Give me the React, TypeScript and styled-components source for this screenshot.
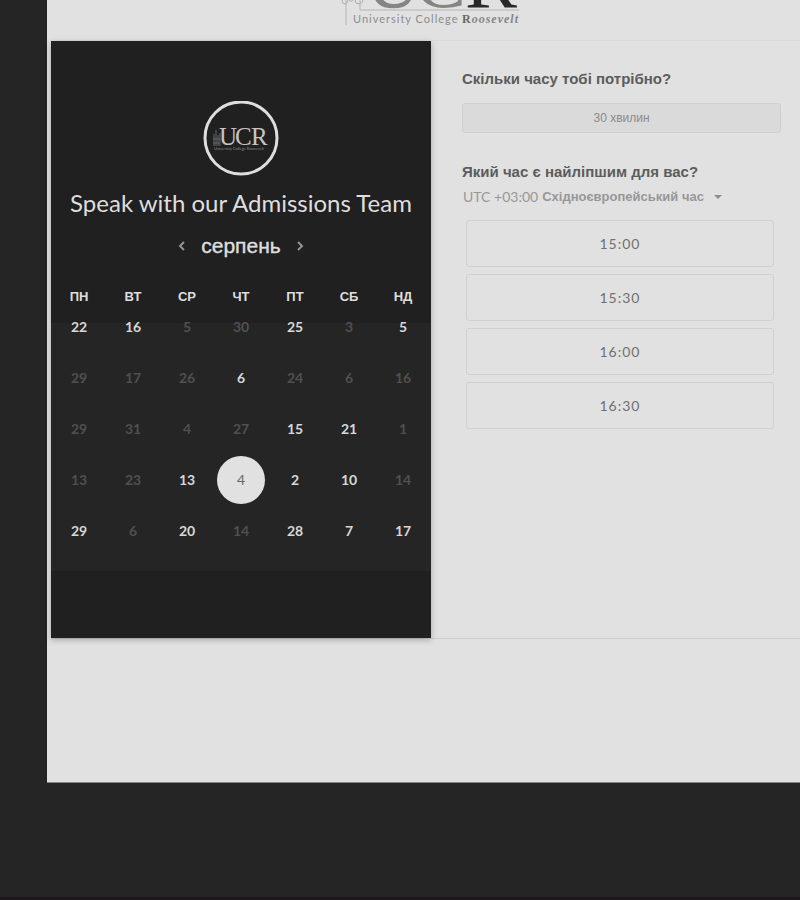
import React, { useState } from "react";
import styled, { createGlobalStyle } from "styled-components";

const GlobalStyle = createGlobalStyle`
  * { box-sizing: border-box; }
  body { margin: 0; background: #252525; font-family: "Liberation Sans", Arial, sans-serif; }
  button, select { font: inherit; color: inherit; }
`;

const Page = styled.div`
  min-height: 100vh;
  padding: 0 0 112px 47px;
  background: #252525;
  border-bottom: 3px solid #1c171a;
`;

const Sheet = styled.main`
  background: #e1e1e1;
  padding: 0 0 143px 4px;
  border-bottom: 1px solid #868786;
`;

const Header = styled.header`
  height: 40px;
  display: flex;
  justify-content: center;
  overflow: hidden;
  margin-right: -14px;
`;

const Booking = styled.section`
  display: flex;
  border-top: 1px solid #dadada;
  border-bottom: 1px solid #cecece;
`;

const DatePanel = styled.div`
  flex: 0 0 380px;
  display: flex;
  flex-direction: column;
  align-items: center;
  padding: 60px 0 67px;
  background: #202020;
  color: #dedede;
  box-shadow: 0 2px 6px rgba(0, 0, 0, 0.25);
`;

const Title = styled.h1`
  margin: 12px 0 0;
  font: 400 24px/28px Lato, sans-serif;
  white-space: nowrap;
`;

const MonthNav = styled.div`
  display: flex;
  align-items: center;
  gap: 11px;
  margin-top: 15px;
`;

const Month = styled.h2`
  margin: 0;
  font-size: 21px;
  font-weight: 400;
  line-height: 28px;
  -webkit-text-stroke: 0.4px currentColor;
`;

const Arrow = styled.button`
  display: grid;
  place-items: center;
  width: 16px;
  height: 24px;
  padding: 0;
  border: 0;
  background: none;
  color: #929292;
`;

const Calendar = styled.table`
  width: 100%;
  margin-top: 33px;
  padding: 0 1px 15px;
  border-spacing: 0;
  table-layout: fixed;
  background: linear-gradient(transparent 30px, #252525 30px) no-repeat;
`;

const Weekday = styled.th`
  padding: 0;
  font-size: 13px;
  line-height: 8px;
`;

const DayCell = styled.td`
  height: 51px;
  padding: 0;
  text-align: center;
`;

const Day = styled.button<{ $selected: boolean }>`
  display: block;
  width: 48px;
  height: 48px;
  margin: 0 auto;
  padding: 0;
  border: 0;
  border-radius: 50%;
  background: ${(p) => (p.$selected ? "#e1e1e1" : "none")};
  color: ${(p) => (p.$selected ? "#686868" : "#d8d8d8")};
  font: ${(p) => (p.$selected ? 400 : 700)} 14px/20px Lato, sans-serif;
  &:disabled { color: #505050; }
`;

const TimePanel = styled.div`
  flex: 1;
  min-width: 0;
  padding: 28px 19px 28px 31px;
`;

const Question = styled.h3`
  margin: 0;
  color: #5c5c5c;
  font-size: 15px;
  line-height: 20px;
`;

const Duration = styled.button`
  display: block;
  width: 100%;
  height: 30px;
  margin: 14px 0 29px;
  padding: 0;
  border: 1px solid #d0d0d0;
  border-radius: 3px;
  background: #dadada;
  color: #8a8a8a;
  font-size: 12px;
`;

const ZoneLabel = styled.label`
  display: flex;
  align-items: center;
  width: max-content;
  margin: 5px 0 13px;
  padding-left: 1px;
  color: #979797;
  font-size: 13px;
  line-height: 20px;
`;

const ZoneOffset = styled.span`
  margin-right: 4px;
  font: 400 14px/20px Lato, sans-serif;
`;

const ZoneSelect = styled.select`
  appearance: none;
  padding: 0;
  border: 0;
  background: none;
  font-weight: 700;
  line-height: 20px;
`;

const Caret = styled.span`
  margin-left: 10px;
  border: 4px solid transparent;
  border-top-color: #8c8c8c;
  border-bottom: 0;
`;

const Slots = styled.div`
  display: grid;
  gap: 7px;
  padding: 0 7px 0 4px;
`;

const Slot = styled.button`
  height: 47px;
  padding: 0;
  border: 1px solid #d0d0d0;
  border-radius: 3px;
  background: none;
  color: #707070;
  font: 400 14px/20px Lato, sans-serif;
  letter-spacing: 1px;
`;

const weekdays = ["ПН", "ВТ", "СР", "ЧТ", "ПТ", "СБ", "НД"];

type DayEntry = [number, boolean];
const weeks: DayEntry[][] = [
  [[22, true], [16, true], [5, false], [30, false], [25, true], [3, false], [5, true]],
  [[29, false], [17, false], [26, false], [6, true], [24, false], [6, false], [16, false]],
  [[29, false], [31, false], [4, false], [27, false], [15, true], [21, true], [1, false]],
  [[13, false], [23, false], [13, true], [4, true], [2, true], [10, true], [14, false]],
  [[29, true], [6, false], [20, true], [14, false], [28, true], [7, true], [17, true]],
];
const times = ["15:00", "15:30", "16:00", "16:30"];

function Wordmark() {
  return (
    <svg width="184" height="30" viewBox="0 0 184 30" role="img" aria-label="University College Roosevelt">
      <text y="7" fill="#858585" fontFamily="Liberation Serif, serif" fontSize="78">
        <tspan x="24">U</tspan><tspan x="73">C</tspan><tspan x="124" fill="#282828">R</tspan>
      </text>
      <path d="M5 0v25M19 0v10h159" fill="none" stroke="#b5b5b5" />
      <path d="M1 0q0 4 3 4q3-1 3-4M8 0q2 3 4 0M14 0q0 4 4 4q4-1 4-4" fill="none" stroke="#adadad" />
      <text x="12" y="23" fill="#8c8c8c" fontFamily="Lato, sans-serif" fontSize="11" letterSpacing="1">University College</text>
      <text x="121" y="23" fill="#666" fontFamily="Liberation Serif, serif" fontSize="12" fontWeight="700" letterSpacing="1">
        R<tspan fontStyle="italic" fill="#858585">oosevelt</tspan>
      </text>
    </svg>
  );
}

function Emblem() {
  return (
    <svg width="76" height="76" viewBox="0 0 76 76" role="img" aria-label="UCR">
      <circle cx="38" cy="37" r="36" fill="#202020" stroke="#dedede" strokeWidth="3" />
      <text y="44" fill="#c4c4c4" fontFamily="Liberation Serif, serif" fontSize="25">
        <tspan x="16">U</tspan><tspan x="32">C</tspan><tspan x="48">R</tspan>
      </text>
      <path d="M11 45V33M13 45V29M15 45V34M17 45V32M10 38h7M10 42h7" fill="none" stroke="#666" />
      <text x="11" y="49" fill="#888" fontFamily="Lato, sans-serif" fontSize="4">University College Roosevelt</text>
    </svg>
  );
}

function Chevron({ d }: { d: string }) {
  return (
    <svg width="8" height="11" viewBox="0 0 8 11" fill="none" stroke="currentColor" strokeWidth="2" aria-hidden="true">
      <path d={d} />
    </svg>
  );
}

export default function App() {
  const [selected, setSelected] = useState("3-3");
  return (
    <>
      <GlobalStyle />
      <Page>
        <Sheet>
          <Header><Wordmark /></Header>
          <Booking>
            <DatePanel>
              <Emblem />
              <Title>Speak with our Admissions Team</Title>
              <MonthNav>
                <Arrow aria-label="Попередній місяць"><Chevron d="M6 1L2 5l4 4" /></Arrow>
                <Month>серпень</Month>
                <Arrow aria-label="Наступний місяць"><Chevron d="M2 1l4 4-4 4" /></Arrow>
              </MonthNav>
              <Calendar>
                <thead>
                  <tr>{weekdays.map((d) => <Weekday key={d} scope="col">{d}</Weekday>)}</tr>
                </thead>
                <tbody>
                  {weeks.map((week, w) => (
                    <tr key={w}>
                      {week.map(([day, open], i) => (
                        <DayCell key={i}>
                          <Day
                            disabled={!open}
                            $selected={selected === `${w}-${i}`}
                            onClick={() => setSelected(`${w}-${i}`)}
                          >
                            {day}
                          </Day>
                        </DayCell>
                      ))}
                    </tr>
                  ))}
                </tbody>
              </Calendar>
            </DatePanel>
            <TimePanel>
              <Question>Скільки часу тобі потрібно?</Question>
              <Duration>30 хвилин</Duration>
              <Question>Який час є найліпшим для вас?</Question>
              <ZoneLabel>
                <ZoneOffset>UTC +03:00</ZoneOffset>
                <ZoneSelect><option>Східноєвропейський час</option></ZoneSelect>
                <Caret />
              </ZoneLabel>
              <Slots>{times.map((t) => <Slot key={t}>{t}</Slot>)}</Slots>
            </TimePanel>
          </Booking>
        </Sheet>
      </Page>
    </>
  );
}
